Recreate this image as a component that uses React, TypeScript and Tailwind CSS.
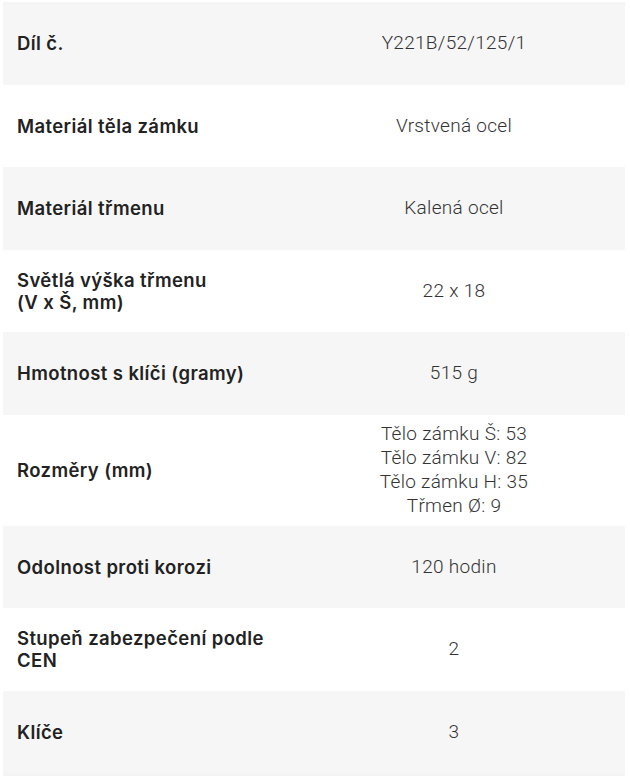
const rows: { label: React.ReactNode; value: React.ReactNode }[] = [
  { label: "Díl č.", value: "Y221B/52/125/1" },
  { label: "Materiál těla zámku", value: "Vrstvená ocel" },
  { label: "Materiál třmenu", value: "Kalená ocel" },
  {
    label: (
      <>
        Světlá výška třmenu
        <br />
        (V x Š, mm)
      </>
    ),
    value: "22 x 18",
  },
  { label: "Hmotnost s klíči (gramy)", value: "515 g" },
  {
    label: "Rozměry (mm)",
    value: (
      <>
        Tělo zámku Š: 53
        <br />
        Tělo zámku V: 82
        <br />
        Tělo zámku H: 35
        <br />
        Třmen Ø: 9
      </>
    ),
  },
  { label: "Odolnost proti korozi", value: "120 hodin" },
  {
    label: (
      <>
        Stupeň zabezpečení podle
        <br />
        CEN
      </>
    ),
    value: "2",
  },
  { label: "Klíče", value: "3" },
];

export default function App() {
  return (
    <div className="min-h-screen bg-white pt-[2px]">
      <div className="mx-[3px] w-[622px] border-b-[3px] border-[#f4f4f4]">
        {rows.map((row, i) => (
          <div
            key={i}
            className={`flex min-h-[82.5px] items-center ${i % 2 === 0 ? "bg-[#f6f6f6]" : "bg-white"}`}
          >
            <div className="w-[280px] pl-[14px] font-['Inter',sans-serif] text-[18.5px] font-semibold leading-[22px] tracking-[0.4px] text-[#222]">
              {row.label}
            </div>
            <div className="flex-1 py-[7.5px] text-center font-['Roboto',sans-serif] text-[19px] font-light leading-[24px] tracking-[0.3px] text-[#333]">
              {row.value}
            </div>
          </div>
        ))}
      </div>
    </div>
  );
}
